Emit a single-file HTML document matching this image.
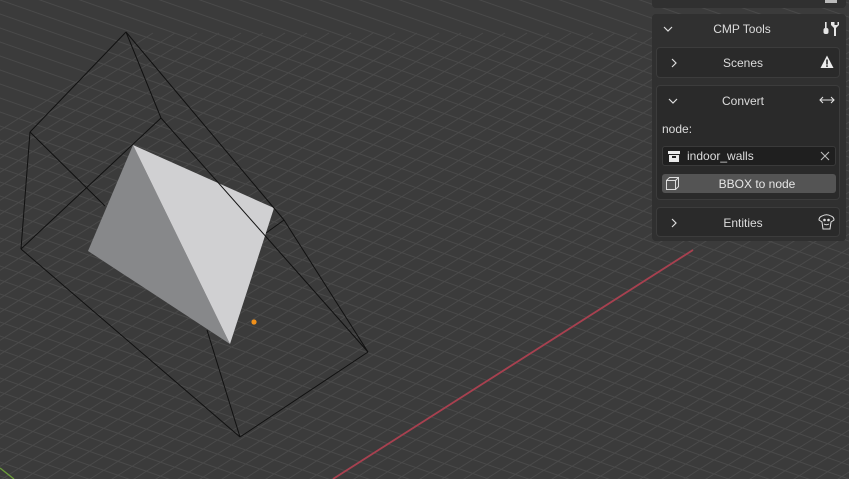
<!DOCTYPE html>
<html><head><meta charset="utf-8">
<style>
html,body{margin:0;padding:0;width:849px;height:479px;overflow:hidden;background:#3b3b3b;font-family:"Liberation Sans","DejaVu Sans",sans-serif;position:relative}
svg.vp{position:absolute;left:0;top:0;overflow:hidden}
.p{position:absolute;color:#dcdcdc;font-size:12px}
.sub{position:absolute;left:656px;width:184px;background:#2a2a2a;border:1px solid #3c3c3c;border-radius:4px;box-sizing:border-box}
.t{position:absolute;width:100%;text-align:center;font-size:12px;color:#dcdcdc}
.sub > .t{left:-5px}
.ch{position:absolute}
</style></head><body>
<svg class="vp" width="849" height="479" viewBox="0 0 849 479">
<g id="grid" stroke="#4a4a4a" stroke-width="1"></g>
<line x1="333" y1="479" x2="693" y2="250" stroke="#a8404f" stroke-width="1.8"/>
<line x1="0" y1="468" x2="14" y2="479" stroke="#6a9a3a" stroke-width="1.4"/>
<g stroke="#111" stroke-width="1" fill="none">
<line x1="30" y1="132" x2="105" y2="206"/>
<line x1="207" y1="330" x2="240" y2="437"/>
<line x1="284" y1="220" x2="266" y2="233"/>
</g>
<polygon points="133,145 88,251 230,344" fill="#87888a"/>
<polygon points="133,145 274,208 230,344" fill="#d0d0d2"/>
<g stroke="#111" stroke-width="1" fill="none">
<line x1="126" y1="32" x2="30" y2="132"/>
<line x1="126" y1="32" x2="161" y2="118"/>
<line x1="126" y1="32" x2="284" y2="220"/>
<line x1="30" y1="132" x2="21" y2="249"/>
<line x1="161" y1="118" x2="21" y2="249"/>
<line x1="161" y1="118" x2="368" y2="352"/>
<line x1="284" y1="220" x2="368" y2="352"/>
<line x1="21" y1="249" x2="240" y2="437"/>
<line x1="240" y1="437" x2="368" y2="352"/>
</g>
<circle cx="254" cy="322" r="2.6" fill="#f0901a"/>
</svg>
<script>
(function(){var g=document.getElementById('grid'),s='';
for(var k=-40;k<40;k++){var x0=333+k*22;s+='<line x1="'+(x0-400)+'" y1="'+(479+254)+'" x2="'+(x0+700)+'" y2="'+(479-446)+'"/>';}
for(var k=-40;k<40;k++){var y0=k*14;s+='<line x1="-100" y1="'+(y0-35)+'" x2="900" y2="'+(y0+315)+'"/>';}
g.innerHTML=s;})();
</script>
<div style="position:absolute;left:652px;top:-6px;width:194px;height:14px;background:#303030;border-radius:4px"></div>
<div style="position:absolute;left:825px;top:0;width:12px;height:3px;background:#bbb"></div>
<div style="position:absolute;left:652px;top:14px;width:194px;height:227px;background:#303030;border-radius:4px"></div>
<svg class="ch" style="left:663px;top:25px" width="10" height="8" viewBox="0 0 10 8"><path d="M1 2 L5 6 L9 2" fill="none" stroke="#ddd" stroke-width="1.2"/></svg>
<div class="t" style="left:650px;width:184px;top:22px">CMP Tools</div>
<svg style="position:absolute;left:823px;top:20px" width="16" height="16" viewBox="0 0 16 16"><rect x="2" y="2" width="1.6" height="6" fill="#e6e6e6"/><rect x="0.5" y="8" width="5" height="6" rx="2" fill="#e6e6e6"/><path d="M8 2 v3 l3 3 v8 h2 v-8 l3 -3 v-3 h-1.5 v3 h-3 v-3 z" fill="#e6e6e6"/></svg>

<div class="sub" style="top:47px;height:31px">
<svg class="ch" style="left:13px;top:10px" width="8" height="10" viewBox="0 0 8 10"><path d="M2 1 L6 5 L2 9" fill="none" stroke="#ddd" stroke-width="1.2"/></svg>
<div class="t" style="top:8px">Scenes</div>
<svg style="position:absolute;left:163px;top:7px" width="14" height="14" viewBox="0 0 14 14"><path d="M7 0.5 L13.5 13 H0.5 Z" fill="#ececec"/><rect x="6.2" y="4.5" width="1.6" height="5" fill="#2a2a2a"/><rect x="6.2" y="10.3" width="1.6" height="1.6" fill="#2a2a2a"/></svg>
</div>

<div class="sub" style="top:85px;height:115px">
<svg class="ch" style="left:11px;top:11px" width="10" height="8" viewBox="0 0 10 8"><path d="M1 2 L5 6 L9 2" fill="none" stroke="#ddd" stroke-width="1.2"/></svg>
<div class="t" style="top:8px">Convert</div>
<svg style="position:absolute;left:162px;top:9px" width="16" height="10" viewBox="0 0 16 10" fill="none" stroke="#e0e0e0" stroke-width="1.1"><path d="M1 5 H15 M4 2 L1 5 L4 8 M12 2 L15 5 L12 8"/></svg>
<div class="p" style="left:5px;top:36px">node:</div>
<div style="position:absolute;left:5px;top:60px;width:174px;height:20px;background:#1f1f1f;border:1px solid #3a3a3a;border-radius:3px;box-sizing:border-box">
<div style="position:absolute;left:5px;top:4px;width:12px;height:3px;background:#e8e8e8"></div>
<div style="position:absolute;left:6px;top:8px;width:10px;height:7px;background:#e8e8e8"></div>
<div style="position:absolute;left:9px;top:9px;width:4px;height:1.5px;background:#1f1f1f"></div>
<div class="p" style="left:24px;top:2px;font-size:12px">indoor_walls</div>
<svg style="position:absolute;left:157px;top:4px" width="10" height="10" viewBox="0 0 10 10"><path d="M1 1 L9 9 M9 1 L1 9" stroke="#bbb" stroke-width="1.1"/></svg>
</div>
<div style="position:absolute;left:5px;top:88px;width:174px;height:19px;background:#545454;border-radius:3px">
<svg style="position:absolute;left:4px;top:3px" width="14" height="14" viewBox="0 0 14 14" fill="none" stroke="#ddd" stroke-width="1"><rect x="0.5" y="3.5" width="9" height="9"/><path d="M0.5 3.5 L3.5 0.5 H12.5 V9.5 L9.5 12.5 M9.5 3.5 L12.5 0.5"/></svg>
<div class="t" style="top:3px;color:#e6e6e6;left:8px">BBOX to node</div>
</div>
</div>

<div class="sub" style="top:207px;height:30px">
<svg class="ch" style="left:13px;top:10px" width="8" height="10" viewBox="0 0 8 10"><path d="M2 1 L6 5 L2 9" fill="none" stroke="#ddd" stroke-width="1.2"/></svg>
<div class="t" style="top:8px">Entities</div>
<svg style="position:absolute;left:161px;top:6px" width="17" height="16" viewBox="0 0 17 16" fill="none" stroke="#e0e0e0" stroke-width="1"><path d="M4 2 Q8.5 -0.5 13 2 Q16 3 16 6 L13 8 L12 15 H5 L4 8 L1 6 Q1 3 4 2 Z"/><circle cx="6.5" cy="6" r="0.8" fill="#e0e0e0"/><circle cx="10.5" cy="6" r="0.8" fill="#e0e0e0"/><path d="M6 10 Q8.5 11.5 11 10"/></svg>
</div>
</body></html>
